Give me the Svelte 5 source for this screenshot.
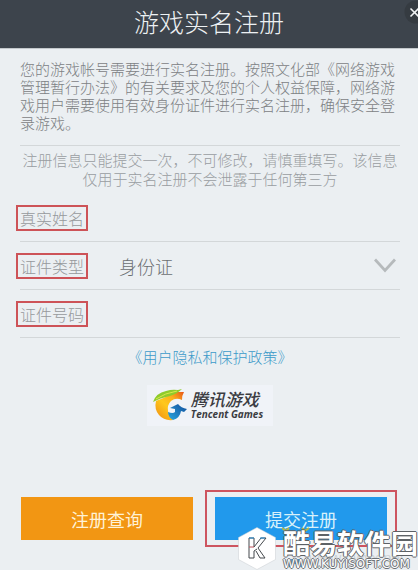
<script lang="ts">
  let name = $state("");
  let idType = $state("id");
  let idNumber = $state("");
</script>

<main class="page">
  <header>
    <h1>游戏实名注册</h1>
    <button class="close" type="button" aria-label="关闭">
      <svg viewBox="0 0 24 24" width="24" height="24" aria-hidden="true">
        <circle cx="12" cy="12" r="11.5" fill="#353b41" />
        <path d="M6.500 8.500l8 8M14.500 8.500l-8 8" stroke="#f0f2f3" stroke-width="1.600" />
      </svg>
    </button>
  </header>

  <form onsubmit={(e) => e.preventDefault()}>
    <p class="intro">
      您的游戏帐号需要进行实名注册。按照文化部《网络游戏管理暂行办法》的有关要求及您的个人权益保障&#xFF0C;网络游戏用户需要使用有效身份证件进行实名注册&#xFF0C;确保安全登录游戏。
    </p>
    <p class="hint">
      注册信息只能提交一次&#xFF0C;不可修改&#xFF0C;请慎重填写。该信息仅用于实名注册不会泄露于任何第三方
    </p>

    <div class="row">
      <label class="mark" for="name">真实姓名</label>
      <input id="name" type="text" bind:value={name} />
    </div>
    <div class="row">
      <label class="mark" for="type">证件类型</label>
      <select id="type" bind:value={idType}>
        <option value="id">身份证</option>
      </select>
      <svg class="chevron" viewBox="0 0 22 15" width="22" height="15" aria-hidden="true">
        <path d="M1 1.500l10 11 10-11" fill="none" stroke="#b6babc" stroke-width="2.800" />
      </svg>
    </div>
    <div class="row">
      <label class="mark" for="number">证件号码</label>
      <input id="number" type="text" bind:value={idNumber} />
    </div>

    <a class="policy" href="#policy">《用户隐私和保护政策》</a>

    <div class="logo">
      <svg viewBox="0 0 35 32" width="35" height="32" aria-hidden="true">
        <defs>
          <linearGradient id="gold" x1="0" y1="1" x2="1" y2="0">
            <stop offset="0" stop-color="#ee8b12" />
            <stop offset="0.450" stop-color="#ffc81c" />
            <stop offset="0.700" stop-color="#fbb01c" />
            <stop offset="1" stop-color="#e8541a" />
          </linearGradient>
          <linearGradient id="blue" x1="0" y1="1" x2="1" y2="0">
            <stop offset="0" stop-color="#28a7df" />
            <stop offset="1" stop-color="#124d9b" />
          </linearGradient>
        </defs>
        <path d="M3 12Q14 8 22 3H31Q29 6 29 11Q23 8 18 12Q14 16 15 22Q16 28 20 31Q11 32 6 26Q1 20 3 12Z" fill="url(#gold)" />
        <path d="M0 13Q3 4 13 2Q19 0 25 1L29 0Q24 5 17 7Q7 9 0 13Z" fill="#8fcb2c" />
        <path d="M3 10Q12 4 24 2" fill="none" stroke="#d9e94b" stroke-width="1" />
        <path d="M17 19L25 15Q28 19 34 20L31 23L28 22Q27 29 20 31Q15 28 15 23Q20 25 22 23L22 20Z" fill="url(#blue)" />
      </svg>
      <div class="brand">
        <span class="brand-cn">腾讯游戏</span>
        <span class="brand-en">Tencent Games</span>
      </div>
    </div>

    <div class="actions">
      <button class="btn query" type="button">注册查询</button>
      <div class="frame">
        <button class="btn submit" type="submit">提交注册</button>
      </div>
    </div>
  </form>

  <div class="ghost" aria-hidden="true">www.pwyx.net</div>
  <svg class="ticks" viewBox="0 0 28 44" width="28" height="44" aria-hidden="true">
    <path d="M0 2l4 3 3-3M20 2l3 3 4-3" fill="none" stroke="#b8b545" stroke-width="2" />
    <path d="M7 33h13v8h-3v-3h-7v3h-3z" fill="#4aa3dc" />
  </svg>
  <div class="watermark">
    <svg viewBox="0 0 38 43" width="38" height="43" aria-hidden="true">
      <path d="M19 0.500L37.500 10.500V32.500L19 42.500L0.500 32.500V10.500Z" fill="#fff" stroke="#c9cdd0" stroke-width="0.500" />
      <path d="M11 11h5v9M11 11v20h5v-7M16 20l7-9h5l-8 10M16 24l3-2M20 21l7 10h-5l-4-7" fill="none" stroke="#45494d" stroke-width="1" />
      <path d="M11 11h5M22 11h5" stroke="#258fd8" stroke-width="1" />
      <path d="M11 20h5" stroke="#bd525b" stroke-width="1" />
    </svg>
    <div class="site">
      <span class="site-cn">酷易软件园</span>
      <span class="site-url">WWW.KUYISOFT.COM</span>
    </div>
  </div>
</main>

<style>
  :global(body) {
    margin: 0;
    background: #ebeff2;
  }

  .page {
    position: relative;
    min-height: 100vh;
    overflow: hidden;
    background: #ebeff2;
    font-family: "Noto Sans CJK SC", sans-serif;
    font-weight: 300;
  }

  header {
    position: relative;
    display: flex;
    align-items: center;
    justify-content: center;
    padding: 3px 0 9px;
    background: #3d444c;
    border-bottom: 1px solid #c3c8cb;
  }
  h1 {
    margin: 0;
    color: #edf1f3;
    font-size: 25px;
    font-weight: 300;
    line-height: 36px;
  }
  .close {
    position: absolute;
    top: 0;
    right: -10px;
    padding: 0;
    border: 0;
    background: none;
    line-height: 0;
  }

  form {
    padding: 11px 18px 0 20px;
  }
  p {
    margin: 0;
    font-size: 15px;
  }
  .intro {
    padding-bottom: 13px;
    border-bottom: 1px solid #d3d7d9;
    color: #7d8184;
    line-height: 18px;
  }
  .hint {
    padding: 4px 0 6px;
    color: #999da1;
    line-height: 19px;
    text-align: center;
  }

  .row {
    position: relative;
    display: flex;
    align-items: center;
    height: 47px;
    border-bottom: 1px solid #d3d7d9;
  }
  .mark {
    flex: none;
    margin-left: -4px;
    padding: 0 2px;
    border: 2px solid #cd5358;
    color: #96999c;
    font-size: 16px;
    line-height: 22px;
  }
  input,
  select {
    flex: 1;
    min-width: 0;
    height: 32px;
    margin: 0 0 0 31px;
    padding: 0;
    border: 0;
    outline: 0;
    background: none;
    color: #6b6f72;
    font: inherit;
    font-size: 18px;
  }
  select {
    appearance: none;
  }
  .chevron {
    position: absolute;
    right: 4px;
    pointer-events: none;
  }

  .policy {
    display: block;
    margin-top: 8px;
    color: #3c9ac9;
    font-size: 15px;
    line-height: 22px;
    text-align: center;
    text-decoration: none;
  }

  .logo {
    display: flex;
    align-items: center;
    gap: 3px;
    width: max-content;
    margin: 17px auto 0;
    padding: 4px 10px 5px 6px;
    background: #f0f3f8;
  }
  .brand {
    display: flex;
    flex-direction: column;
    color: #3b3c42;
    font-style: italic;
    white-space: nowrap;
  }
  .brand-cn {
    font-size: 17px;
    font-weight: 500;
    line-height: 19px;
  }
  .brand-en {
    font-family: "Open Sans", sans-serif;
    font-size: 10px;
    font-weight: 700;
    line-height: 13px;
  }

  .actions {
    display: flex;
    align-items: center;
    gap: 12px;
    margin-top: 64px;
    padding: 0 3px 0 1px;
  }
  .btn {
    height: 43px;
    padding: 0;
    border: 0;
    color: #fff2d6;
    font-family: inherit;
    font-size: 18px;
    font-weight: 400;
  }
  .query {
    flex: 1;
    background: #f29613;
  }
  .frame {
    display: flex;
    flex: 1;
    padding: 5px 8px;
    border: 2px solid #cd5560;
  }
  .submit {
    flex: 1;
    background: #2199ec;
    color: #d8f1fb;
  }

  .ghost {
    position: absolute;
    right: 14px;
    bottom: 2px;
    color: #cfd3d6;
    font-family: "Liberation Sans", sans-serif;
    font-size: 15px;
    line-height: 20px;
  }
  .ticks {
    position: absolute;
    right: 108px;
    bottom: 0;
  }
  .watermark {
    position: absolute;
    right: 0;
    bottom: 0;
    display: flex;
    gap: 7px;
    color: #fff;
    pointer-events: none;
  }
  .site {
    display: flex;
    flex-direction: column;
    justify-content: flex-end;
    white-space: nowrap;
  }
  .site-cn {
    font-size: 27px;
    font-weight: 700;
    line-height: 30px;
    text-shadow: 1px 0 #5d6266, -1px 0 #5d6266, 0 1px #5d6266, 0 -1px #5d6266;
  }
  .site-url {
    font-family: "DejaVu Sans", sans-serif;
    font-size: 12px;
    font-weight: 400;
    line-height: 12px;
    text-shadow: 1px 0 #6d7276, -1px 0 #6d7276, 0 1px #6d7276, 0 -1px #6d7276;
  }
</style>
